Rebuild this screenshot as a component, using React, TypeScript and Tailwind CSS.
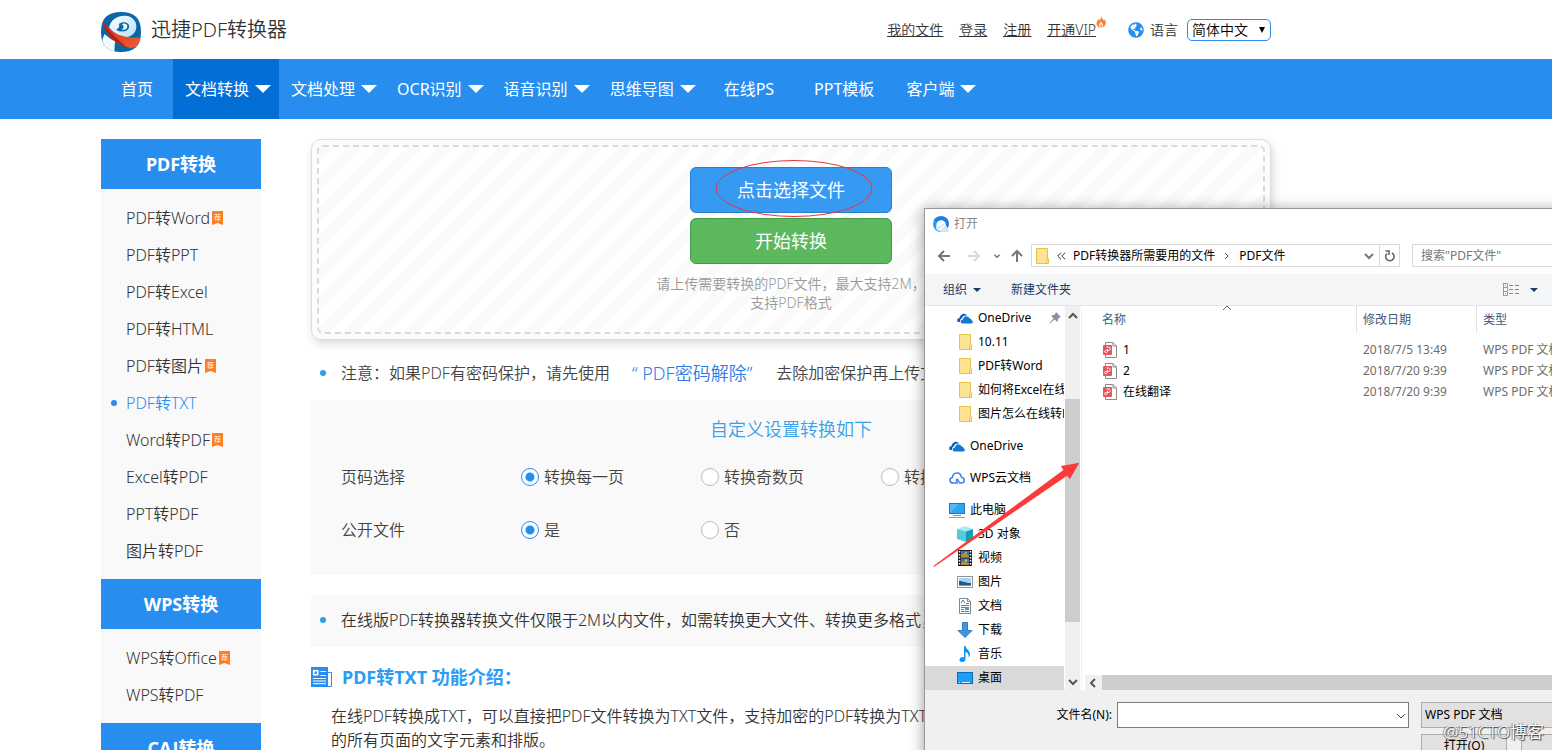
import React, { useState } from "react";
import { FaGlobeAmericas } from "react-icons/fa";

type NavItem = { label: string; menu?: boolean; active?: boolean };

const navItems: NavItem[] = [
  { label: "首页" },
  { label: "文档转换", menu: true, active: true },
  { label: "文档处理", menu: true },
  { label: "OCR识别", menu: true },
  { label: "语音识别", menu: true },
  { label: "思维导图", menu: true },
  { label: "在线PS" },
  { label: "PPT模板" },
  { label: "客户端", menu: true },
];

type SideItem = { label: string; hot?: boolean; active?: boolean };

const sideGroups: { title: string; items: SideItem[] }[] = [
  {
    title: "PDF转换",
    items: [
      { label: "PDF转Word", hot: true },
      { label: "PDF转PPT" },
      { label: "PDF转Excel" },
      { label: "PDF转HTML" },
      { label: "PDF转图片", hot: true },
      { label: "PDF转TXT", active: true },
      { label: "Word转PDF", hot: true },
      { label: "Excel转PDF" },
      { label: "PPT转PDF" },
      { label: "图片转PDF" },
    ],
  },
  {
    title: "WPS转换",
    items: [{ label: "WPS转Office", hot: true }, { label: "WPS转PDF" }],
  },
  { title: "CAJ转换", items: [] },
];

function Logo() {
  return (
    <svg viewBox="0 0 120 120" className="size-10 shrink-0" aria-hidden="true">
      <defs>
        <clipPath id="logoClip">
          <path d="M60 0C100 0 120 18 120 60S100 120 60 120 0 102 0 60 20 0 60 0Z" />
        </clipPath>
        <linearGradient id="logoRed" x1="0" y1="0" x2="1" y2="1">
          <stop offset="0" stopColor="#d02b12" />
          <stop offset="1" stopColor="#f2603c" />
        </linearGradient>
        <linearGradient id="logoBowl" x1="0" y1="0" x2="1" y2="1">
          <stop offset="0" stopColor="#ffffff" />
          <stop offset="1" stopColor="#b9def4" />
        </linearGradient>
      </defs>
      <g clipPath="url(#logoClip)">
        <rect width="120" height="120" fill="#0a66a5" />
        <path d="M10 66C20 74 32 84 42 88L40 120H8L4 84Z" fill="#f4f9fd" />
        <path d="M24 46C30 22 50 10 72 11C94 12 108 28 106 46C104 66 88 78 66 76C50 72 34 60 24 46Z" fill="url(#logoBowl)" />
        <path d="M46 52C54 50 56 44 54 36C62 28 80 28 84 40C86 54 74 60 62 58C58 60 50 58 46 52Z" fill="#0a66a5" />
        <path d="M62 36C70 32 80 36 79 44C78 52 68 55 60 53C70 50 70 42 62 36Z" fill="#eaf6fd" />
        <path d="M4 28C30 60 58 82 120 76C118 98 104 108 90 108C52 104 16 74 4 28Z" fill="url(#logoRed)" />
        <path d="M4 28C14 66 40 94 78 106C58 88 30 70 4 28Z" fill="#b31f10" />
      </g>
    </svg>
  );
}

function Flame() {
  return (
    <svg viewBox="0 0 20 24" className="h-3 w-2.5" aria-hidden="true">
      <path
        d="M10 0C11 5 15 6 16 10C17 9 17 8 17 6C20 10 20 14 19 17C17 21 14 23 10 23S1 21 1 15C1 10 5 9 6 5C7 6 7 7 7 9C10 7 10 4 10 0Z"
        fill="#ff7d33"
      />
      <path d="M10 11C11 14 14 15 14 18S12 22 10 22 6 20 6 18 8 15 10 11Z" fill="#ffffff" />
      <path d="M10 16C11 17 12 18 12 19S11 21 10 21 8 20 8 19 9 17 10 16Z" fill="#ff7d33" />
    </svg>
  );
}

function HotBadge() {
  return (
    <svg viewBox="0 0 33 42" className="ml-0.5 h-3.5 w-[11px]" aria-hidden="true">
      <path d="M0 0H33V42L16.500 36L0 42Z" fill="#ff7e21" />
      <text x="16.500" y="27" textAnchor="middle" fontSize="21" fill="#ffffff">
        荐
      </text>
    </svg>
  );
}

function Caret({ className }: { className: string }) {
  return (
    <svg viewBox="0 0 16 8" className={className} aria-hidden="true" preserveAspectRatio="none">
      <path d="M0 0H16L8 8Z" fill="currentColor" />
    </svg>
  );
}

function Chevron({ className, d = "M2 4L6 8L10 4" }: { className: string; d?: string }) {
  return (
    <svg viewBox="0 0 12 12" className={className} fill="none" stroke="currentColor" aria-hidden="true">
      <path d={d} />
    </svg>
  );
}

function FolderIcon() {
  return (
    <svg viewBox="0 0 16 16" className="size-4 shrink-0" aria-hidden="true">
      <path d="M2.500 .5H13.500V10L14.500 11V15.500H2.500Z" fill="#ffe394" stroke="#e8c14a" />
      <path d="M12.500 15V11L13.500 10" fill="none" stroke="#e8c14a" />
    </svg>
  );
}

function OneDriveIcon() {
  return (
    <svg viewBox="0 0 16 16" className="size-4 shrink-0" aria-hidden="true">
      <path d="M1 12C-.5 11 0 8 2.500 8C3 4 8 2 10 5.500C6.500 5 5 7 5 8.500C3 9 2.500 11 3.500 12Z" fill="#0a62b8" />
      <path d="M5.500 13.500C3 13.300 3 9.600 6 9.600C6.300 6 11 5 12.500 8.500C14 8.300 14.500 9.500 14.400 10.300C16.500 11 16 13.500 14.500 13.500Z" fill="#0f78d4" />
    </svg>
  );
}

function CloudIcon() {
  return (
    <svg viewBox="0 0 16 16" className="size-4 shrink-0" fill="none" stroke="#3f83f0" strokeWidth="1.500" aria-hidden="true">
      <path d="M9 13H4C.3 13-.2 8.300 3.500 7.600C3.500 1.500 12 1.500 12.300 7.200C16.500 8 15.800 13 12.500 13H11L8 9.500M9.500 9.500H7.500V12" />
    </svg>
  );
}

function ComputerIcon() {
  return (
    <svg viewBox="0 0 16 16" className="size-4 shrink-0" aria-hidden="true">
      <rect x=".5" y="1.500" width="15" height="10" fill="#4fb9fb" stroke="#2676a8" />
      <path d="M1 11L10 2H15V11Z" fill="#2fa4f2" />
      <path d="M4 13.500H12" stroke="#7f95a3" />
      <path d="M0 15.500H16" stroke="#8a9db5" />
    </svg>
  );
}

function CubeIcon() {
  return (
    <svg viewBox="0 0 16 16" className="size-4 shrink-0" aria-hidden="true">
      <path d="M0 3L8 0L16 3L9 5.500Z" fill="#a9ebf2" />
      <path d="M0 3L9 5.500V16L0 13Z" fill="#53cbda" />
      <path d="M16 3L9 5.500V16L16 13Z" fill="#0f9db3" />
    </svg>
  );
}

function VideoIcon() {
  return (
    <svg viewBox="0 0 16 16" className="size-4 shrink-0" aria-hidden="true">
      <rect x="1" y="0" width="14" height="16" fill="#1d1d1d" />
      <path d="M2.500 1V16M13.500 1V16" stroke="#ffffff" strokeWidth="1.500" strokeDasharray="1.500 1.500" />
      <rect x="4" y="1" width="8" height="6.500" fill="#3b6fd0" />
      <rect x="4" y="8.500" width="8" height="6.500" fill="#3b6fd0" />
      <path d="M4 5L8 3L12 6V7.500H4ZM4 13L7 11L12 14V15H4Z" fill="#b8922b" />
      <circle cx="9" cy="3" r="1.200" fill="#7bc242" />
      <circle cx="9" cy="10.500" r="1.200" fill="#e8b52b" />
    </svg>
  );
}

function PictureIcon() {
  return (
    <svg viewBox="0 0 16 16" className="size-4 shrink-0" aria-hidden="true">
      <rect x=".5" y="2.500" width="15" height="11" fill="#ffffff" stroke="#8e9499" />
      <rect x="2" y="4" width="12" height="8" fill="#a6d3f5" />
      <path d="M2 7C6 7 8 9 14 9V12H2Z" fill="#2c5875" />
      <path d="M2 11H14V12H2Z" fill="#5aa2d8" />
    </svg>
  );
}

function DocumentIcon() {
  return (
    <svg viewBox="0 0 16 16" className="size-4 shrink-0" aria-hidden="true">
      <path d="M2.500 .5H10.500L13.500 3.500V15.500H2.500Z" fill="#ffffff" stroke="#83888c" />
      <path d="M10.500 .5V3.500H13.500" fill="none" stroke="#83888c" />
      <path d="M4 5L6 2L8 5M9 5.500H12M4 7.500H12M4 9.500H8M4 11.500H7M4 13.500H12" fill="none" stroke="#3b87b8" />
      <rect x="8" y="9" width="4" height="3" fill="#4e94bd" />
    </svg>
  );
}

function DownloadIcon() {
  return (
    <svg viewBox="0 0 16 16" className="size-4 shrink-0" aria-hidden="true">
      <path d="M5.500 .5H10.500V8.500H15L8 15.500L1 8.500H5.500Z" fill="#3c97e4" stroke="#2a7cc4" />
    </svg>
  );
}

function MusicIcon() {
  return (
    <svg viewBox="0 0 16 16" className="size-4 shrink-0" aria-hidden="true">
      <path d="M7 0H8.500C9 3 13 4.500 13 8C13 10 12 11 11.500 11.500C12 8 10.500 6.500 8.500 6V13C8.500 17 2 17 2.500 13.500C3 11 6 10.500 7 11.500Z" fill="#0d96f2" />
    </svg>
  );
}

function DesktopIcon() {
  return (
    <svg viewBox="0 0 16 16" className="size-4 shrink-0" aria-hidden="true">
      <rect x=".5" y="2.500" width="15" height="11" fill="#18a0fb" stroke="#0d6cb0" />
      <path d="M2 12.500H3M5 12.500H13" stroke="#dff2ff" />
    </svg>
  );
}

function PdfIcon() {
  return (
    <svg viewBox="0 0 16 16" className="size-4 shrink-0" aria-hidden="true">
      <path d="M3.500 .5H11L14.500 4V15.500H3.500Z" fill="#ffffff" stroke="#8b8b8b" />
      <path d="M11 .5V4H14.500" fill="none" stroke="#8b8b8b" />
      <rect x="1" y="3" width="9" height="10" rx="1" fill="#e8545b" />
      <path d="M4.500 5H6.500C8.800 5 8.800 8.500 6.500 8.500H5.500V7M5.500 8.500C5.500 11.500 2.500 11 2.500 9.500C2.500 8.500 4 8.500 5.500 8.500" fill="none" stroke="#ffffff" />
    </svg>
  );
}

function BrowserIcon() {
  return (
    <svg viewBox="0 0 16 16" className="size-4 shrink-0" aria-hidden="true">
      <circle cx="8" cy="8" r="8" fill="#2e9bf2" />
      <path d="M1 4C4-1 14-1 15.500 6C16 9 15 11 14 12L8 9Z" fill="#1d7fe0" />
      <path d="M3.500 10C2.500 5 8 2.500 11.500 5.500C13 7 12.500 8 12.500 8.500L15 13C12 16 6 16 3.500 13C3 12 3.300 11 3.500 10Z" fill="#ffffff" />
      <path d="M4.500 12C7 12.500 8 9.500 10.500 8.500" fill="none" stroke="#8cc6f5" />
      <path d="M7 15L12 9.500L16 14C16 16 15 16 14 16H8Z" fill="#cfe4f5" />
    </svg>
  );
}

function PinIcon() {
  return (
    <svg viewBox="0 0 12 12" className="size-3 shrink-0" aria-hidden="true">
      <path d="M7 0L12 5L10.500 5.500L9 7L8.500 10L5.500 7.500L1 11.500L.5 11L4.500 6.500L2 3.500L5 3L6.500 1.500Z" fill="#8493a3" />
    </svg>
  );
}

function ArticleIcon() {
  return (
    <svg viewBox="0 0 21 20" className="h-5 w-[21px] shrink-0" aria-hidden="true">
      <rect width="17" height="20" fill="#278ef0" />
      <path d="M17 5.500H20.500V19.500H15" fill="none" stroke="#278ef0" />
      <rect x="2.700" y="3.700" width="4" height="4" fill="none" stroke="#ffffff" strokeWidth="1.600" />
      <path d="M9.500 4.500H15M9.500 8.500H15M2 11.500H15M2 14H15M2 16.700H15" stroke="#ffffff" />
    </svg>
  );
}

function Header() {
  return (
    <header className="ml-[101px] flex h-[59px] max-w-[1170px] items-center justify-between">
      <a href="#home" className="flex items-start gap-2.5 pt-1 text-xl text-[#333]">
        <Logo />
        <span className="leading-9">迅捷PDF转换器</span>
      </a>
      <div className="flex items-center text-sm text-[#333]">
        <nav className="flex gap-4 underline">
          <a href="#files">我的文件</a>
          <a href="#login">登录</a>
          <a href="#register">注册</a>
          <a href="#vip" className="relative mr-8">
            开通VIP
            <span className="absolute -top-1 left-full">
              <Flame />
            </span>
          </a>
        </nav>
        <label htmlFor="language" className="mr-[9px] flex items-center gap-1.5">
          <FaGlobeAmericas className="size-4 text-[#278ef0]" />
          语言
        </label>
        <span className="relative">
          <select
            id="language"
            defaultValue="zh"
            className="h-[22px] w-21 appearance-none rounded-[5px] border border-[#278ef0] bg-white pl-1 text-sm leading-5 text-black"
          >
            <option value="zh">简体中文</option>
          </select>
          <Caret className="pointer-events-none absolute top-2 right-1.5 h-1.5 w-1.5 text-black" />
        </span>
      </div>
    </header>
  );
}

function NavBar() {
  return (
    <nav className="bg-[#278ef0] text-base font-normal text-white">
      <ul className="ml-[101px] flex h-15">
        {navItems.map((item) => (
          <li key={item.label}>
            <a
              href={"#" + item.label}
              className={
                (item.active ? "bg-[#036fd6] " : "") +
                (item.menu ? "pr-2 pl-3 " : "px-5 ") +
                "flex h-full items-center gap-1.5 whitespace-nowrap"
              }
            >
              {item.label}
              {item.menu && <Caret className="h-2 w-4" />}
            </a>
          </li>
        ))}
      </ul>
    </nav>
  );
}

function Sidebar() {
  return (
    <aside className="w-40 shrink-0 bg-[#f9f9f9]">
      {sideGroups.map((group) => (
        <section key={group.title}>
          <h2 className="flex h-[50px] items-center justify-center bg-[#278ef0] text-lg font-bold text-white">
            {group.title}
          </h2>
          <ul className="py-2.5">
            {group.items.map((item) => (
              <li key={item.label}>
                <a
                  href={"#" + item.label}
                  className={
                    (item.active ? "text-[#278ef0] " : "text-[#333] ") +
                    "flex h-[37px] items-center pl-2.5 text-base"
                  }
                >
                  <span className={(item.active ? "bg-[#278ef0] " : "") + "mr-[9px] size-1.5 rounded-full"} />
                  {item.label}
                  {item.hot && <HotBadge />}
                </a>
              </li>
            ))}
          </ul>
        </section>
      ))}
    </aside>
  );
}

function UploadBox() {
  return (
    <section className="rounded-[10px] border border-[#ddd] bg-[#fcfcfc] p-[5px] shadow-[2px_4px_10px_rgba(0,0,0,0.15)]">
      <div className="flex h-[189px] flex-col items-center gap-[5px] rounded-md border-2 border-dashed border-[#dadada] bg-white bg-[linear-gradient(135deg,#fafafa_25%,transparent_25%,transparent_50%,#fafafa_50%,#fafafa_75%,transparent_75%,transparent)] bg-size-[30px_30px] pt-5">
        <button
          type="button"
          className="relative h-[46px] w-[202px] rounded-md border border-[#2a80d0] bg-[#369af3] text-lg font-normal text-white"
        >
          点击选择文件
          <svg viewBox="0 0 158 58" className="pointer-events-none absolute -top-2 left-6 h-[58px] w-[158px]" aria-hidden="true">
            <ellipse cx="79" cy="28.500" rx="78" ry="28" fill="none" stroke="#e8373a" />
          </svg>
        </button>
        <button
          type="button"
          className="h-[46px] w-[202px] rounded-md border border-[#47984a] bg-[#5cb85c] text-lg font-normal text-white"
        >
          开始转换
        </button>
        <p className="mt-[5px] w-[272px] text-center text-sm leading-[19px] text-[#999]">
          请上传需要转换的PDF文件，最大支持2M，
          <br />
          支持PDF格式
        </p>
      </div>
    </section>
  );
}

function RadioRow({ title, name, options }: { title: string; name: string; options: string[] }) {
  const [value, setValue] = useState(options[0]);
  return (
    <div
      role="radiogroup"
      aria-labelledby={name + "-title"}
      className="flex h-[53px] items-center pl-[30px] text-base text-[#444]"
    >
      <span id={name + "-title"} className="w-45 shrink-0">
        {title}
      </span>
      {options.map((option) => (
        <label key={option} className="flex w-45 shrink-0 items-center gap-[5px]">
          <input
            type="radio"
            name={name}
            checked={value === option}
            onChange={() => setValue(option)}
            className="size-[18px] appearance-none rounded-full border border-[#bbb] bg-white checked:border-[#278ef0] checked:bg-[radial-gradient(circle,#278ef0_4px,#fff_5px)]"
          />
          {option}
        </label>
      ))}
    </div>
  );
}

function Bullet() {
  return <span className="mr-[15px] ml-[9px] size-1.5 shrink-0 rounded-full bg-[#2a9df4]" />;
}

function MainColumn() {
  return (
    <main className="min-w-0 flex-1">
      <UploadBox />
      <p className="flex h-15 items-center pt-[5px] text-base whitespace-nowrap text-[#444]">
        <Bullet />
        注意：如果PDF有密码保护，请先使用
        <a href="#unlock" className="mr-6 ml-5.5 text-lg text-[#2e7ae6]">
          “ PDF密码解除”
        </a>
        去除加密保护再上传文件
      </p>
      <section className="bg-[#f9f9f9] pb-[19px]">
        <h2 className="h-[50px] pt-[15px] text-center text-lg text-[#3aa0ea]">自定义设置转换如下</h2>
        <RadioRow title="页码选择" name="pages" options={["转换每一页", "转换奇数页", "转换偶数页"]} />
        <RadioRow title="公开文件" name="public" options={["是", "否"]} />
      </section>
      <p className="mt-5 flex h-[52px] items-center overflow-hidden bg-[#f9f9f9] pb-0.5 text-base whitespace-nowrap text-[#333]">
        <Bullet />
        在线版PDF转换器转换文件仅限于2M以内文件，如需转换更大文件、转换更多格式，请下载客户端
      </p>
      <h2 className="mt-4 flex items-center gap-2.5 text-lg font-bold text-[#2a9df4]">
        <ArticleIcon />
        PDF转TXT 功能介绍：
      </h2>
      <p className="mt-[13px] pl-5 text-base whitespace-nowrap text-[#333]">
        在线PDF转换成TXT，可以直接把PDF文件转换为TXT文件，支持加密的PDF转换为TXT文件
        <br />
        的所有页面的文字元素和排版。
      </p>
    </main>
  );
}

type TreeNode = { label: string; icon: React.ReactNode; child?: boolean; selected?: boolean; pinned?: boolean };

const treeGroups: TreeNode[][] = [
  [
    { label: "OneDrive", icon: <OneDriveIcon />, child: true, pinned: true },
    { label: "10.11", icon: <FolderIcon />, child: true },
    { label: "PDF转Word", icon: <FolderIcon />, child: true },
    { label: "如何将Excel在线转换", icon: <FolderIcon />, child: true },
    { label: "图片怎么在线转PDF", icon: <FolderIcon />, child: true },
  ],
  [{ label: "OneDrive", icon: <OneDriveIcon /> }],
  [{ label: "WPS云文档", icon: <CloudIcon /> }],
  [
    { label: "此电脑", icon: <ComputerIcon /> },
    { label: "3D 对象", icon: <CubeIcon />, child: true },
    { label: "视频", icon: <VideoIcon />, child: true },
    { label: "图片", icon: <PictureIcon />, child: true },
    { label: "文档", icon: <DocumentIcon />, child: true },
    { label: "下载", icon: <DownloadIcon />, child: true },
    { label: "音乐", icon: <MusicIcon />, child: true },
    { label: "桌面", icon: <DesktopIcon />, child: true, selected: true },
  ],
];

const files = [
  { name: "1", date: "2018/7/5 13:49", type: "WPS PDF 文档" },
  { name: "2", date: "2018/7/20 9:39", type: "WPS PDF 文档" },
  { name: "在线翻译", date: "2018/7/20 9:39", type: "WPS PDF 文档" },
];

function AddressRow() {
  return (
    <div className="flex h-[37px] items-center pl-3 text-[#777]">
      <button type="button" aria-label="后退" className="w-7.5">
        <svg viewBox="0 0 14 12" className="h-3 w-3.5" fill="none" stroke="currentColor" strokeWidth="2">
          <path d="M13 6H2M7 1L2 6L7 11" />
        </svg>
      </button>
      <button type="button" aria-label="前进" className="w-6.5 text-[#d9d9d9]">
        <svg viewBox="0 0 14 12" className="h-3 w-3.5" fill="none" stroke="currentColor" strokeWidth="2">
          <path d="M1 6H12M7 1L12 6L7 11" />
        </svg>
      </button>
      <button type="button" aria-label="最近位置" className="w-[18px]">
        <Chevron className="size-2 stroke-2" />
      </button>
      <button type="button" aria-label="上移" className="w-5">
        <svg viewBox="0 0 12 14" className="h-3.5 w-3" fill="none" stroke="currentColor" strokeWidth="2">
          <path d="M6 13V2M1 7L6 2L11 7" />
        </svg>
      </button>
      <div className="flex h-[23px] w-[369px] shrink-0 items-center border border-[#d9d9d9] text-black">
        <span className="mr-1.5 ml-0.5">
          <FolderIcon />
        </span>
        <Chevron className="mr-[7px] size-2.5" d="M6 2L2 6L6 10M11 2L7 6L11 10" />
        PDF转换器所需要用的文件
        <Chevron className="mx-1.5 size-3 text-[#555]" d="M4 3L7 6L4 9" />
        PDF文件
        <Chevron className="mr-1 ml-auto size-3 stroke-2 text-[#777]" />
        <button type="button" aria-label="刷新" className="flex h-full w-5 items-center justify-center border-l border-[#d9d9d9] text-[#666]">
          <svg viewBox="0 0 12 14" className="h-3.5 w-3" fill="none" stroke="currentColor" strokeWidth="1.600">
            <path d="M8 4A4.200 4.200 0 1 1 3 4.500M1.500 2H5V6" />
          </svg>
        </button>
      </div>
      <input
        aria-label="搜索"
        placeholder={'搜索"PDF文件"'}
        className="ml-3 h-[23px] min-w-0 flex-1 border border-[#d9d9d9] bg-white pl-2 placeholder:text-[#767676]"
      />
    </div>
  );
}

function FolderTree() {
  return (
    <div className="flex w-[156px] shrink-0">
      <div className="flex w-[139px] shrink-0 flex-col gap-2 overflow-hidden">
        {treeGroups.map((group, index) => (
          <ul key={index}>
            {group.map((node) => (
              <li
                key={node.label}
                className={
                  (node.child ? "pl-8 " : "pl-6 ") +
                  (node.selected ? "bg-[#d9d9d9] " : "") +
                  "flex h-6 items-center gap-[5px] whitespace-nowrap"
                }
              >
                {node.icon}
                {node.label}
                {node.pinned && (
                  <span className="mr-[3px] ml-auto">
                    <PinIcon />
                  </span>
                )}
              </li>
            ))}
          </ul>
        ))}
      </div>
      <div className="ml-px flex w-[15px] flex-col items-center bg-[#f0f0f0] text-[#555]">
        <Chevron className="my-1 size-3 stroke-2" d="M2 8L6 4L10 8" />
        <div className="mt-[73px] h-[223px] w-full bg-[#cdcdcd]" />
        <Chevron className="mt-auto mb-0.5 size-3 stroke-2" />
      </div>
    </div>
  );
}

function FileList() {
  return (
    <div className="flex min-w-0 flex-1 flex-col border-l border-[#f0f0f0] pl-[3px]">
      <table className="w-full table-fixed text-left">
        <thead className="text-[#44597a]">
          <tr>
            <th className="relative w-[271px] pb-1.5 pl-[17px] font-normal">
              名称
              <Chevron className="absolute -top-1 left-34 size-3 text-[#666]" d="M2 8L6 4L10 8" />
            </th>
            <th className="w-30 pb-1.5 font-normal">
              <div className="h-[27px] border-l border-[#e2e2e2] pl-1.5 leading-[27px]">修改日期</div>
            </th>
            <th className="pb-1.5 font-normal">
              <div className="h-[27px] border-l border-[#e2e2e2] pl-1.5 leading-[27px]">类型</div>
            </th>
          </tr>
        </thead>
        <tbody className="text-[#6d6d6d]">
          {files.map((file) => (
            <tr key={file.name} className="h-[21px] whitespace-nowrap">
              <td className="pl-[17px] text-black">
                <span className="flex items-center gap-[5px]">
                  <PdfIcon />
                  {file.name}
                </span>
              </td>
              <td className="pl-[7px]">{file.date}</td>
              <td className="pl-[7px]">{file.type}</td>
            </tr>
          ))}
        </tbody>
      </table>
      <div className="mt-auto flex h-[15px] bg-[#f0f0f0] text-[#555]">
        <Chevron className="mt-0.5 mr-[3px] ml-0.5 size-3 stroke-2" d="M8 2L4 6L8 10" />
        <div className="flex-1 bg-[#cdcdcd]" />
      </div>
    </div>
  );
}

function OpenDialog() {
  return (
    <section
      role="dialog"
      aria-label="打开"
      className="absolute top-[208px] -right-10 -bottom-10 left-[924px] flex flex-col border-t border-l border-[#999] bg-[#f0f0f0] text-xs font-normal text-black shadow-[0_2px_14px_rgba(0,0,0,0.4)]"
    >
      <div className="bg-white">
        <h2 className="flex h-7 items-center gap-[5px] pt-0.5 pl-2 text-[#888]">
          <BrowserIcon />
          打开
        </h2>
        <AddressRow />
      </div>
      <div className="flex h-8 shrink-0 items-center border-b border-[#e5e7ea] bg-[#f4f5f7] pl-[18px] text-[#1e3a63]">
        <button type="button" className="flex items-center gap-1.5">
          组织
          <Caret className="h-1 w-2" />
        </button>
        <button type="button" className="ml-7.5">
          新建文件夹
        </button>
        <button type="button" aria-label="视图" className="mr-[54px] ml-auto flex items-center gap-2.5">
          <svg viewBox="0 0 17 13" className="h-[13px] w-[17px]" fill="none" aria-hidden="true">
            <rect x=".5" y=".5" width="4" height="12" fill="#fff" stroke="#999" />
            <path d="M0 4.500H5M0 8.500H5" stroke="#999" />
            <path d="M6 2.500H10M12 2.500H16M6 6.500H10M12 6.500H16M6 10.500H10M12 10.500H16" stroke="#888" />
            <path d="M2 2.500H3" stroke="#4a90d9" />
            <path d="M2 10.500H3" stroke="#d33" />
          </svg>
          <Caret className="h-1 w-2" />
        </button>
      </div>
      <div className="flex h-96 shrink-0 bg-white">
        <FolderTree />
        <FileList />
      </div>
      <div className="flex pt-3">
        <label htmlFor="filename" className="w-48 pt-[5px] pr-[5px] text-right">
          文件名(N):
        </label>
        <span className="relative w-73 shrink-0">
          <input id="filename" className="h-[26px] w-full border border-[#7a7a7a] bg-white px-2" />
          <Chevron className="pointer-events-none absolute top-2 right-0.5 size-3 text-[#444]" />
        </span>
        <div className="ml-3 flex min-w-0 flex-1 flex-col gap-1.5">
          <select
            aria-label="文件类型"
            className="h-[26px] w-full appearance-none border border-[#adadad] bg-[#e1e1e1] pl-[3px]"
            defaultValue="pdf"
          >
            <option value="pdf">WPS PDF 文档</option>
          </select>
          <div className="flex gap-3.5">
            <button type="button" className="h-6 w-[86px] border border-[#adadad] bg-[#e1e1e1]">
              打开(O)
            </button>
            <button type="button" aria-label="取消" className="h-6 flex-1 border border-[#adadad] bg-[#e1e1e1]" />
          </div>
        </div>
      </div>
    </section>
  );
}

export default function App() {
  return (
    <div className="relative h-screen overflow-hidden bg-white font-['Noto_Sans','Noto_Sans_CJK_SC',sans-serif] font-[350]">
      <Header />
      <NavBar />
      <div className="ml-[101px] flex max-w-[1170px] gap-[50px] pt-5">
        <Sidebar />
        <MainColumn />
      </div>
      <OpenDialog />
      <svg viewBox="39 186 441 315" className="pointer-events-none absolute top-[462px] left-[933px] h-[105px] w-[147px]" aria-hidden="true">
        <path d="M39 499L430 210L423 198L478 188L450 237L441 227L43 500Z" fill="#fb3b3a" />
      </svg>
      <div className="pointer-events-none absolute right-2 bottom-1.5 text-[17px] text-white [text-shadow:1px_1px_1px_#333,-1px_0_1px_#777]">
        @51CTO博客
      </div>
    </div>
  );
}
